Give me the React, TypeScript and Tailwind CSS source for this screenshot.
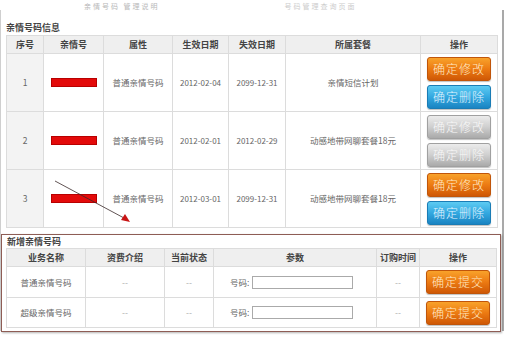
import React from 'react';

type Variant = 'orange' | 'blue' | 'gray';

const btnStyles: Record<Variant, string> = {
    orange: 'bg-linear-to-b from-[#f8a22a] via-[#ec7a12] to-[#cf5806] border-[#c0550a] text-[#ffe9c4]',
    blue: 'bg-linear-to-b from-[#5ccbf2] via-[#33a8e0] to-[#1a84c2] border-[#1a7cb5] text-[#e2f5ff]',
    gray: 'bg-linear-to-b from-[#ececec] via-[#cfcfcf] to-[#aaaaaa] border-[#a0a0a0] text-[#f8f8f8]',
};

const Btn: React.FC<{ label: string; variant: Variant }> = ({ label, variant }) => (
    <div
        className={`w-[64px] h-[24px] rounded-[3px] border flex items-center justify-center text-[12px] font-light tracking-[1px] shadow-[0_1px_1px_rgba(0,0,0,0.25)] ${btnStyles[variant]}`}
    >
        {label}
    </div>
);

const RedBar = () => <div className="mx-auto w-[46px] h-[9px] bg-[#e30a0a] border border-[#b80000]" />;

interface Row {
    no: string;
    start: string;
    end: string;
    plan: string;
    disabled?: boolean;
}

const rows: Row[] = [
    { no: '1', start: '2012-02-04', end: '2099-12-31', plan: '亲情短信计划' },
    { no: '2', start: '2012-02-01', end: '2012-02-29', plan: '动感地带网聊套餐18元', disabled: true },
    { no: '3', start: '2012-03-01', end: '2099-12-31', plan: '动感地带网聊套餐18元' },
];

const th = 'border border-[#dcdcdc] bg-[#efefef] font-bold text-[#444] text-[9px] text-center align-middle p-0';
const td = 'border border-[#dcdcdc] text-[#666] text-[8.5px] text-center align-middle p-0';

export default function App() {
    return (
        <div
            className="relative w-[510px] h-[341px] bg-white overflow-hidden"
            style={{ fontFamily: '"Noto Sans CJK SC", "Noto Sans", sans-serif' }}
        >
            {/* faint text from the area above */}
            <div className="h-[10px] flex items-end text-[7px] text-[#b8b8b8] leading-[8px]">
                <div className="ml-[84px] tracking-[2px]">亲情号码 管理说明</div>
                <div className="ml-[125px] tracking-[2px] text-[#cccccc]">号码管理查询页面</div>
            </div>

            <div className="w-[504px] h-[321px] border-l border-l-[#cfcfcf] border-r-2 border-r-[#a9a9a9]">
                <div className="h-[25px] flex items-end pb-[3px] pl-[5px] text-[9px] font-bold text-[#444] leading-none">
                    亲情号码信息
                </div>

                <table className="ml-[5px] w-[491px] table-fixed border-collapse">
                    <colgroup>
                        <col className="w-[37px]" />
                        <col className="w-[60px]" />
                        <col className="w-[69px]" />
                        <col className="w-[56px]" />
                        <col className="w-[57px]" />
                        <col className="w-[135px]" />
                        <col className="w-[77px]" />
                    </colgroup>
                    <thead>
                        <tr className="h-[18px]">
                            <th className={th}>序号</th>
                            <th className={th}>亲情号</th>
                            <th className={th}>属性</th>
                            <th className={th}>生效日期</th>
                            <th className={th}>失效日期</th>
                            <th className={th}>所属套餐</th>
                            <th className={th}>操作</th>
                        </tr>
                    </thead>
                    <tbody>
                        {rows.map((r) => (
                            <tr key={r.no} className="h-[58px]">
                                <td className={`${td} bg-[#f3f3f3] text-[#444]`}>{r.no}</td>
                                <td className={td}>
                                    <RedBar />
                                </td>
                                <td className={td}>普通亲情号码</td>
                                <td className={`${td} text-[8px]`}>{r.start}</td>
                                <td className={`${td} text-[8px]`}>{r.end}</td>
                                <td className={td}>{r.plan}</td>
                                <td className={td}>
                                    <div className="flex flex-col items-center gap-[4px]">
                                        <Btn label="确定修改" variant={r.disabled ? 'gray' : 'orange'} />
                                        <Btn label="确定删除" variant={r.disabled ? 'gray' : 'blue'} />
                                    </div>
                                </td>
                            </tr>
                        ))}
                    </tbody>
                </table>

                <div className="mt-[6px] w-[500px] h-[98px] border border-[#8e5d55] shadow-[1px_1px_2px_rgba(0,0,0,0.3)] pl-[4px]">
                    <div className="h-[13px] flex items-center pl-[1px] text-[9px] font-bold text-[#444] leading-none">
                        新增亲情号码
                    </div>
                    <table className="w-[490px] table-fixed border-collapse">
                        <colgroup>
                            <col className="w-[79px]" />
                            <col className="w-[79px]" />
                            <col className="w-[49px]" />
                            <col className="w-[163px]" />
                            <col className="w-[43px]" />
                            <col className="w-[77px]" />
                        </colgroup>
                        <thead>
                            <tr className="h-[18px]">
                                <th className={th}>业务名称</th>
                                <th className={th}>资费介绍</th>
                                <th className={th}>当前状态</th>
                                <th className={th}>参数</th>
                                <th className={th}>订购时间</th>
                                <th className={th}>操作</th>
                            </tr>
                        </thead>
                        <tbody>
                            {['普通亲情号码', '超级亲情号码'].map((name, i) => (
                                <tr key={name} className={i === 0 ? 'h-[31px]' : 'h-[30px]'}>
                                    <td className={td}>{name}</td>
                                    <td className={`${td} text-[#aaa]`}>--</td>
                                    <td className={`${td} text-[#aaa]`}>--</td>
                                    <td className={`${td} text-left`}>
                                        <div className="flex items-center pl-[16px] gap-[3px]">
                                            <span>号码:</span>
                                            <div className="w-[101px] h-[13px] border border-[#aaa] bg-white" />
                                        </div>
                                    </td>
                                    <td className={`${td} text-[#aaa]`}>--</td>
                                    <td className={td}>
                                        <div className="flex justify-center">
                                            <Btn label="确定提交" variant="orange" />
                                        </div>
                                    </td>
                                </tr>
                            ))}
                        </tbody>
                    </table>
                </div>
            </div>

            {/* annotation arrow drawn over the table */}
            <svg className="absolute left-0 top-0 pointer-events-none" width="510" height="341">
                <line x1="55" y1="181" x2="124" y2="218" stroke="#3a2a2a" strokeWidth="0.8" />
                <polygon points="130,222 121,220 125,214" fill="#c81414" />
            </svg>
        </div>
    );
}
